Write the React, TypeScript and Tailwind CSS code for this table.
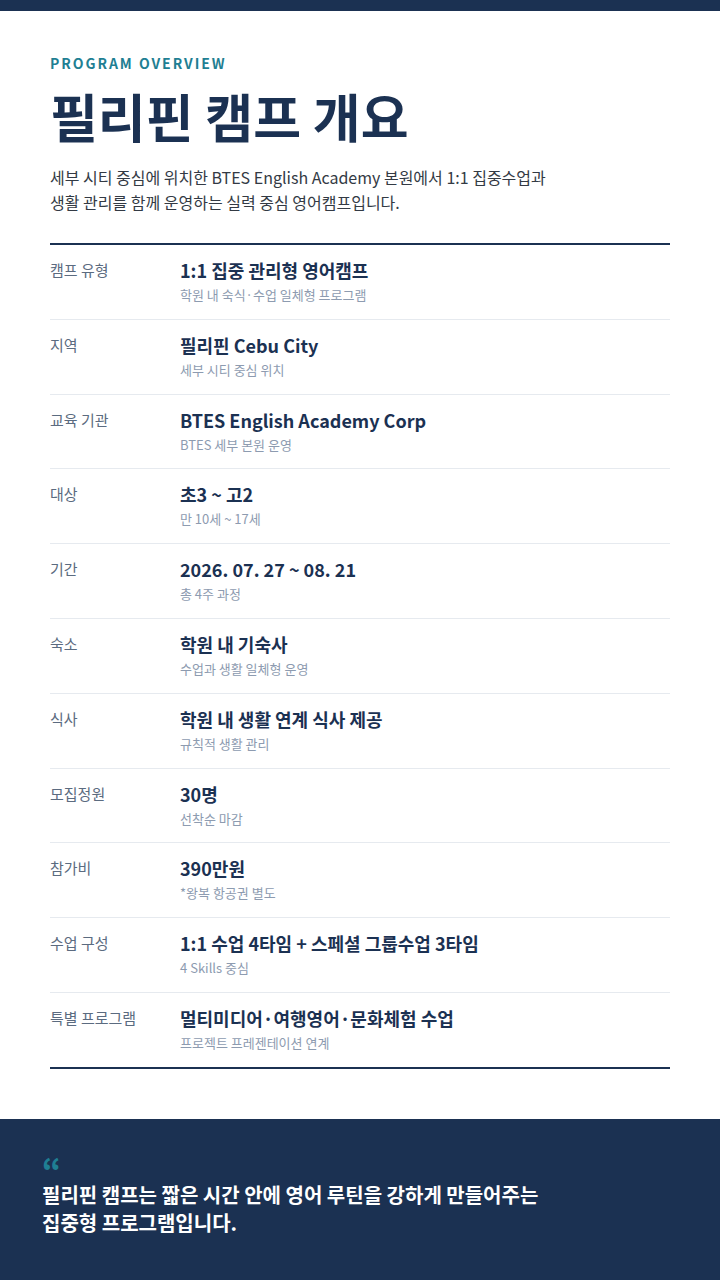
const rows = [
  { label: "캠프 유형", value: "1:1 집중 관리형 영어캠프", sub: "학원 내 숙식·수업 일체형 프로그램" },
  { label: "지역", value: "필리핀 Cebu City", sub: "세부 시티 중심 위치" },
  { label: "교육 기관", value: "BTES English Academy Corp", sub: "BTES 세부 본원 운영" },
  { label: "대상", value: "초3 ~ 고2", sub: "만 10세 ~ 17세" },
  { label: "기간", value: "2026. 07. 27 ~ 08. 21", sub: "총 4주 과정" },
  { label: "숙소", value: "학원 내 기숙사", sub: "수업과 생활 일체형 운영" },
  { label: "식사", value: "학원 내 생활 연계 식사 제공", sub: "규칙적 생활 관리" },
  { label: "모집정원", value: "30명", sub: "선착순 마감" },
  { label: "참가비", value: "390만원", sub: "*왕복 항공권 별도" },
  { label: "수업 구성", value: "1:1 수업 4타임 + 스페셜 그룹수업 3타임", sub: "4 Skills 중심" },
  { label: "특별 프로그램", value: "멀티미디어·여행영어·문화체험 수업", sub: "프로젝트 프레젠테이션 연계" },
];

export default function App() {
  return (
    <div className="w-[720px] min-h-[1280px] bg-white flex flex-col font-['Noto_Sans_CJK_KR','Noto_Sans',sans-serif]">
      <div className="h-[11px] bg-[#1b3152]" />

      <div className="px-[50px] pt-[44px] pb-[50px]">
        <p className="text-[14px] font-bold tracking-[0.14em] text-[#1f7f93] leading-[16px]">PROGRAM OVERVIEW</p>
        <h1 className="mt-[15px] text-[52px] font-bold text-[#1b3152] leading-[60px]">필리핀 캠프 개요</h1>
        <p className="mt-[19px] text-[16px] text-[#333a44] leading-[25px]">
          세부 시티 중심에 위치한 BTES English Academy 본원에서 1:1 집중수업과
          <br />
          생활 관리를 함께 운영하는 실력 중심 영어캠프입니다.
        </p>

        <div className="mt-[28px] border-t-2 border-b-2 border-[#1b3152]">
          {rows.map((r, i) => (
            <div
              key={r.label}
              className={`flex pt-[12px] pb-[13.8px] ${i < rows.length - 1 ? "border-b border-[#e6eaef]" : ""}`}
            >
              <div className="w-[130px] shrink-0 text-[15px] text-[#5b6b80] leading-[26px]">{r.label}</div>
              <div className="flex flex-col">
                <div className="text-[18px] font-bold text-[#1b3152] leading-[26px]">{r.value}</div>
                <div className="mt-[2px] text-[13px] text-[#8d9bb0] leading-[20px]">{r.sub}</div>
              </div>
            </div>
          ))}
        </div>
      </div>

      <div className="flex-1 bg-[#1b3152] px-[42px] pt-[39px] pb-[40px]">
        <div className="h-[20px] text-[30px] font-black text-[#1f7f93] leading-[20px]">“</div>
        <p className="mt-[3px] text-[20px] font-bold text-white leading-[28px]">
          필리핀 캠프는 짧은 시간 안에 영어 루틴을 강하게 만들어주는
          <br />
          집중형 프로그램입니다.
        </p>
      </div>
    </div>
  );
}
